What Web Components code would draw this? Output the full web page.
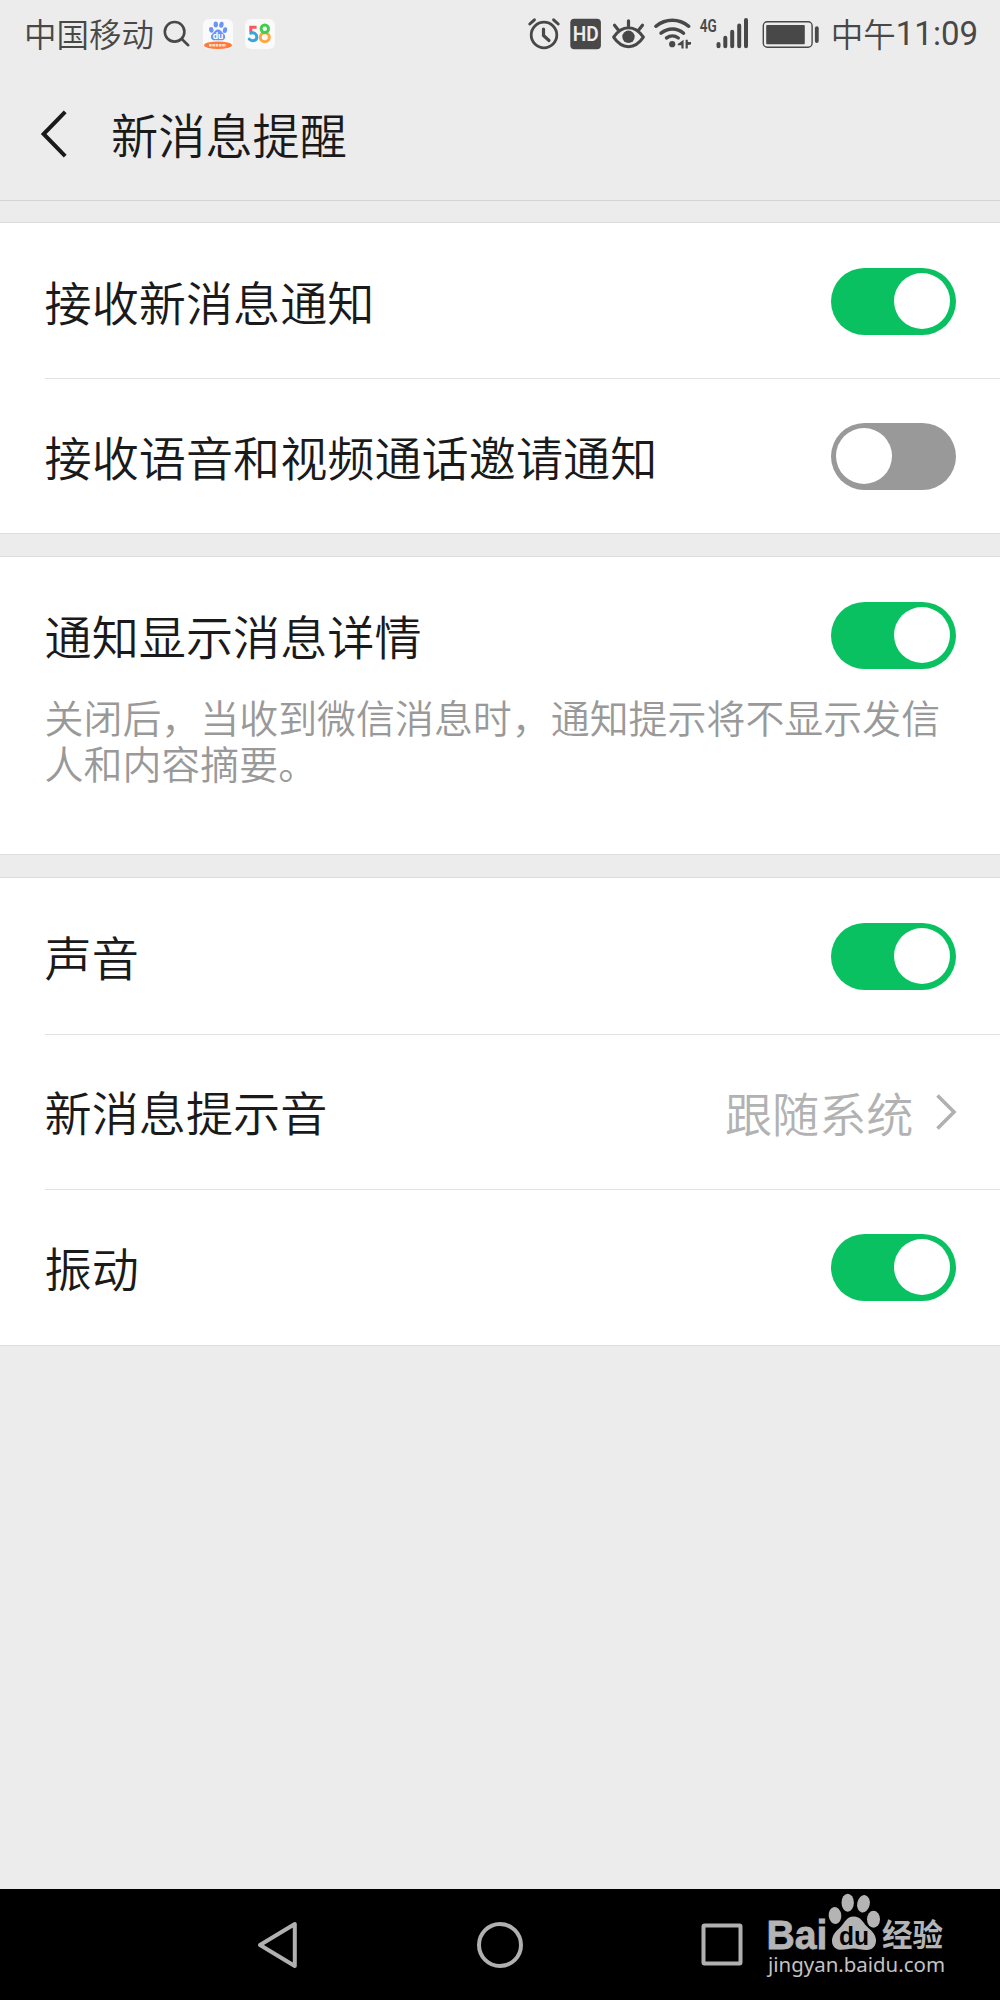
<!DOCTYPE html>
<html lang="zh-CN">
<head>
<meta charset="utf-8">
<title>新消息提醒</title>
<style>
    body{
        margin: 0;
        background: #ececec;
        font-family: "Noto Sans CJK SC DemiLight", "Noto Sans CJK SC", sans-serif;
        font-weight: 350;
        color: #1a1a1a;
    }
</style>
</head>
<body>
<phone-screen>
    <status-bar slot="status" carrier="中国移动" period="中午" time="11:09"></status-bar>
    <title-bar slot="title">新消息提醒</title-bar>

    <settings-group>
        <settings-row>接收新消息通知<toggle-switch slot="end" on></toggle-switch></settings-row>
        <settings-row>接收语音和视频通话邀请通知<toggle-switch slot="end"></toggle-switch></settings-row>
    </settings-group>

    <settings-group style="--height: 299px">
        <settings-row>通知显示消息详情<toggle-switch slot="end" on></toggle-switch>
            <span slot="note">关闭后，当收到微信消息时，通知提示将不显示发信人和内容摘要。</span>
        </settings-row>
    </settings-group>

    <settings-group style="--row: 155.6px">
        <settings-row>声音<toggle-switch slot="end" on></toggle-switch></settings-row>
        <settings-row>新消息提示音<link-value slot="end">跟随系统</link-value></settings-row>
        <settings-row>振动<toggle-switch slot="end" on></toggle-switch></settings-row>
    </settings-group>

    <nav-bar slot="nav"><site-mark></site-mark></nav-bar>
</phone-screen>

<script>
class BaseElement extends HTMLElement{

    constructor(){
        super();
        this.attachShadow({ mode : "open"});
    }

    connectedCallback(){
        this.shadowRoot.innerHTML = `<style>${this.constructor.styles}</style>${this.render()}`;
    }
}

class PhoneScreen extends BaseElement{

    static get styles(){
        return `
            :host{
                display: flex;
                flex-direction: column;
                width: 1000px;
                height: 2000px;
                overflow: hidden;
            }

            main{
                flex: 1;
                display: flex;
                flex-direction: column;
                gap: 22px;
                padding-top: 21px;
            }
        `
    }

    render(){
        return `
            <slot name="status"></slot>
            <slot name="title"></slot>
            <main><slot></slot></main>
            <slot name="nav"></slot>
        `
    }
}

class StatusBar extends BaseElement{

    static get styles(){
        return `
            :host{
                display: flex;
                justify-content: space-between;
                height: 68px;
                padding: 0 22px 0 24px;
                box-sizing: border-box;
                color: #484848;
                font-size: 32.5px;
                line-height: 68px;
            }

            .side{
                display: flex;
                align-items: center;
                white-space: nowrap;
            }

            svg{
                display: block;
                height: 36px;
                overflow: visible;
                fill: none;
                stroke: #484848;
                stroke-linecap: round;
            }

            .solid{ fill: #484848; stroke: none; }

            .label{ margin-top: -2px; }

            .digits{
                font: 400 33px/68px Roboto, sans-serif;
            }
        `
    }

    // every viewBox uses screen coordinates, so neighbouring icons share one grid
    render(){
        return `
            <div class="side">
                <span class="label">${this.getAttribute("carrier")}</span>
                <svg width="43" viewBox="154 16 43 36" stroke-width="2.6">
                    <circle cx="174.6" cy="31.8" r="9.8"/>
                    <path d="M181.8 39l6.4 6.2"/>
                </svg>
                <svg width="43" viewBox="197 16 43 36">
                    <rect x="203" y="19" width="30" height="30" rx="6" fill="#fafafa" stroke="none"/>
                    <g fill="#6a94f8" stroke="none">
                        <ellipse cx="211.3" cy="29.8" rx="2.2" ry="2.9" transform="rotate(-12 211.3 29.8)"/>
                        <ellipse cx="215.8" cy="24.6" rx="2.2" ry="3"/>
                        <ellipse cx="221.4" cy="24.8" rx="2.2" ry="3" transform="rotate(10 221.4 24.8)"/>
                        <ellipse cx="225" cy="30.2" rx="2.1" ry="2.9" transform="rotate(12 225 30.2)"/>
                        <path d="M218 29.5c-3 0-3.6 2.6-5.6 4.3-2.2 2-1.9 6.2 1.6 6.4 2 .1 6 .1 8.2 0 3.4-.2 3.8-4.4 1.5-6.4-1.9-1.7-2.8-4.3-5.7-4.3z"/>
                    </g>
                    <text x="218" y="39" text-anchor="middle" font-family="Inter, sans-serif" font-size="8.5" font-weight="700" fill="#fff" stroke="none">du</text>
                    <ellipse cx="218" cy="45.2" rx="14" ry="3.8" fill="#ff7b3d" stroke="none"/>
                    <path d="M209 45.3h17" stroke="#ffe3c8" stroke-width="2.6" stroke-dasharray="2.6 .7" stroke-linecap="butt"/>
                </svg>
                <svg width="40" viewBox="240 16 40 36" stroke-width="3">
                    <rect x="245" y="19" width="30" height="30" rx="6" fill="#fafafa" stroke="none"/>
                    <path d="M256.6 27.3H250.8V32" stroke="#fb5664" stroke-linecap="butt"/>
                    <path d="M250.8 33.2c3-1 6 .4 6 3.7 0 4.3-5.4 4.7-7.5 2.2" stroke="#35a5dc"/>
                    <circle cx="264.8" cy="37.2" r="4.5" stroke="#ffa83c"/>
                    <circle cx="264.8" cy="28.8" r="3.7" stroke="#3fcf4d"/>
                </svg>
            </div>
            <div class="side">
                <svg width="39" viewBox="526 16 39 36" stroke-width="2.8">
                    <circle cx="544" cy="35" r="12.8"/>
                    <path d="M543.5 29v6.5l5.5 5" stroke-width="3.2"/>
                    <path d="M529.8 24l4.6-4.2M558.2 24l-4.6-4.2" stroke-width="3"/>
                </svg>
                <svg width="41" viewBox="565 16 41 36">
                    <rect class="solid" x="570.3" y="18.8" width="30.6" height="30.4" rx="4"/>
                    <text x="585.8" y="41" text-anchor="middle" textLength="26" lengthAdjust="spacingAndGlyphs" font-family="Roboto, sans-serif" font-size="19.5" font-weight="600" fill="#ececec" stroke="none">HD</text>
                </svg>
                <svg width="43" viewBox="606 16 43 36" stroke-width="3">
                    <path d="M613.6 37.2C622 24.5 635 24.5 643.4 37.2 635 49.8 622 49.8 613.6 37.2z" stroke-linejoin="round"/>
                    <circle class="solid" cx="628.5" cy="36.8" r="6.2"/>
                    <path d="M614.5 25.2l3.8 4.8M628.5 20.8v5M642.5 25.2l-3.8 4.8" stroke-width="3.2"/>
                </svg>
                <svg width="46" viewBox="649 16 46 36" stroke-width="3.4">
                    <path d="M655.8 26.3c10-8 23-8 33 0M661 33.2c7-5.6 16-5.6 22.6 0M666.5 38c3.6-2.6 8.3-2.6 11.8 0"/>
                    <circle class="solid" cx="672.2" cy="44.2" r="3.1"/>
                    <path class="solid" d="M683.6 39.8v8.6h-2.2v-3.2h-3.6v-1.2zM685.6 39.8v8.6h2.2v-3.4l3.2-.6v-2.4h-3.2v-2.2z"/>
                </svg>
                <svg width="60" viewBox="695 16 60 36" stroke-width="4">
                    <text x="699.8" y="31.6" textLength="17" lengthAdjust="spacingAndGlyphs" font-family="Roboto, sans-serif" font-size="19" font-weight="600" fill="#484848" stroke="none">4G</text>
                    <path d="M718.5 44v2.2M725.3 37.8v8.4M732.2 31.8v14.4M739.2 25.5v20.7M746 20v26.2"/>
                </svg>
                <svg width="76" viewBox="755 16 76 36" stroke-width="1.4">
                    <rect x="763.3" y="21.7" width="48.8" height="25.6" rx="4"/>
                    <rect class="solid" x="766.2" y="25" width="38.6" height="19.2" rx="1"/>
                    <path d="M816.8 28.2v12.8" stroke-width="3.8"/>
                </svg>
                <span class="label">${this.getAttribute("period")}</span>
                <span class="digits">${this.getAttribute("time")}</span>
            </div>
        `
    }
}

class TitleBar extends BaseElement{

    static get styles(){
        return `
            :host{
                display: flex;
                align-items: center;
                gap: 42px;
                height: 133px;
                box-sizing: border-box;
                padding: 0 0 0 37px;
                border-bottom: 1px solid #d5d5d5;
                font-size: 47.2px;
                line-height: 133px;
            }

            svg{ display: block; }

            span{ margin-top: -2px; }
        `
    }

    render(){
        return `
            <svg width="32" height="54" viewBox="0 0 32 54" fill="none" stroke="#1a1a1a" stroke-width="4">
                <path d="M28.2 4.8L6.6 27l21.6 22.2"/>
            </svg>
            <span><slot></slot></span>
        `
    }
}

class SettingsGroup extends BaseElement{

    static get styles(){
        return `
            :host{
                display: block;
                height: var(--height, auto);
                background: #fff;
                border-top: 1px solid #dcdcdc;
                border-bottom: 1px solid #dedede;
                box-sizing: border-box;
            }

            ::slotted(settings-row:not(:first-child)){
                --divider: #e1e1e1;
            }
        `
    }

    render(){
        return `<slot></slot>`
    }
}

class SettingsRow extends BaseElement{

    static get styles(){
        return `
            :host{
                display: block;
                margin-left: 44.5px;
            }

            .line{
                display: flex;
                justify-content: space-between;
                align-items: center;
                height: var(--row, 155px);
                padding-right: 44.5px;
                box-sizing: border-box;
                border-top: 1px solid var(--divider, transparent);
                font-size: 47.15px;
                line-height: 60px;
            }

            .label{ margin-top: -1px; }

            .note{
                display: block;
                width: 906px;
                margin-top: -18px;
                color: #999;
                font-size: 38.95px;
                line-height: 45.7px;
            }
        `
    }

    render(){
        const note = this.querySelector("[slot=note]") ? `<div class="note"><slot name="note"></slot></div>` : "";
        return `
            <div class="line">
                <span class="label"><slot></slot></span>
                <slot name="end"></slot>
            </div>
            ${note}
        `
    }
}

class ToggleSwitch extends BaseElement{

    static get styles(){
        return `
            :host{
                display: flex;
                align-items: center;
                width: 125px;
                height: 67px;
                padding: 0 5.5px;
                box-sizing: border-box;
                border-radius: 34px;
                background: #999;
            }

            :host([on]){
                justify-content: flex-end;
                background: #09c160;
            }

            .knob{
                width: 56px;
                height: 56px;
                border-radius: 50%;
                background: #fff;
            }
        `
    }

    render(){
        return `<div class="knob"></div>`
    }
}

class LinkValue extends BaseElement{

    static get styles(){
        return `
            :host{
                display: flex;
                align-items: center;
                gap: 20px;
                margin-right: -1px;
                color: #b2b2b2;
            }

            svg{ display: block; }
        `
    }

    render(){
        return `
            <slot></slot>
            <svg width="23" height="38" viewBox="0 0 23 38" fill="none" stroke="#b0b0b0" stroke-width="3.6">
                <path d="M3.5 2.5L20 19 3.5 35.5"/>
            </svg>
        `
    }
}

class NavBar extends BaseElement{

    static get styles(){
        return `
            :host{
                display: flex;
                justify-content: center;
                align-items: center;
                gap: 174px;
                position: relative;
                height: 111px;
                background: #000;
            }

            svg{ display: block; }

            ::slotted(site-mark){
                position: absolute;
                left: 764px;
                top: 3px;
            }
        `
    }

    render(){
        const attrs = `width="48" height="48" viewBox="0 0 48 48" fill="none" stroke="#b0b0b0" stroke-width="4" stroke-linejoin="round"`;
        return `
            <svg ${attrs}><path d="M40.800 3v42L6 24z"/></svg>
            <svg ${attrs}><circle cx="24" cy="24" r="21"/></svg>
            <svg ${attrs}><rect x="5.5" y="4.5" width="37" height="38" rx="1"/></svg>
            <slot></slot>
        `
    }
}

class SiteMark extends BaseElement{

    static get styles(){
        return `
            :host{ display: block; }
            svg{ display: block; }
        `
    }

    render(){
        return `
            <svg width="186" height="92" viewBox="764 1892 186 92" fill="#b4b4b4">
                <text x="766.5" y="1948.5" textLength="61" lengthAdjust="spacingAndGlyphs" font-family="Liberation Sans, sans-serif" font-size="40" font-weight="700" stroke="#b4b4b4" stroke-width=".8">Bai</text>
                <ellipse cx="835" cy="1915.5" rx="6.3" ry="8.6" transform="rotate(-6 835 1915.5)"/>
                <ellipse cx="847.7" cy="1902.7" rx="6.2" ry="9"/>
                <ellipse cx="863.5" cy="1903.8" rx="6.3" ry="8.8" transform="rotate(12 863.5 1903.8)"/>
                <ellipse cx="873.5" cy="1919.2" rx="6.5" ry="8.5"/>
                <path d="M853.5 1916.5c-7 0-9 6.5-12.5 10-4.5 4.5-9 8-9 14.5 0 5.5 4 8.8 9 8.8 4.5 0 8-1.3 12.5-1.3s8.5 1.600 13 1.600c6 0 9.500-4 9.500-9.500 0-6.500-5-10-9.500-14.500-3.500-3.500-5.500-9.600-13-9.600z"/>
                <text x="839" y="1944.5" textLength="30" lengthAdjust="spacingAndGlyphs" font-family="Liberation Sans, sans-serif" font-size="26" font-weight="700" fill="#000">du</text>
                <text x="882" y="1946" textLength="61" lengthAdjust="spacingAndGlyphs" font-family="Noto Sans CJK SC, sans-serif" font-size="31" font-weight="700">经验</text>
                <text x="768" y="1972" textLength="177" lengthAdjust="spacingAndGlyphs" font-family="Noto Sans, sans-serif" font-size="20.5" font-weight="400" fill="#c4c4c4">jingyan.baidu.com</text>
            </svg>
        `
    }
}

customElements.define("phone-screen", PhoneScreen)
customElements.define("status-bar", StatusBar)
customElements.define("title-bar", TitleBar)
customElements.define("settings-group", SettingsGroup)
customElements.define("settings-row", SettingsRow)
customElements.define("toggle-switch", ToggleSwitch)
customElements.define("link-value", LinkValue)
customElements.define("nav-bar", NavBar)
customElements.define("site-mark", SiteMark)
</script>
</body>
</html>
